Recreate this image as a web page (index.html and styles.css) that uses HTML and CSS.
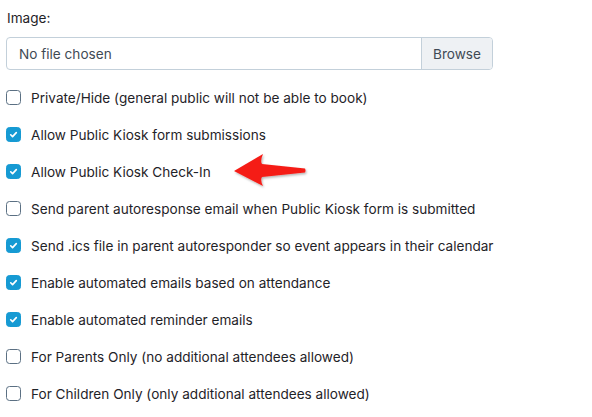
FILE: index.html
```html
<!DOCTYPE html>
<html>
<head>
<meta charset="utf-8">
<link rel="stylesheet" href="styles.css">
</head>
<body>
<div class="form">
  <label class="field-label">Image:</label>
  <div class="file-input">
    <span class="file-name">No file chosen</span>
    <span class="browse">Browse</span>
  </div>
  <div class="checks">
    <div class="row"><span class="box"></span><span>Private/Hide (general public will not be able to book)</span></div>
    <div class="row"><span class="box on"><svg viewBox="0 0 14 14"><path d="M4 7.3l2 2 4-4.3" fill="none" stroke="#fff" stroke-width="1.8" stroke-linecap="round" stroke-linejoin="round"/></svg></span><span>Allow Public Kiosk form submissions</span></div>
    <div class="row"><span class="box on"><svg viewBox="0 0 14 14"><path d="M4 7.3l2 2 4-4.3" fill="none" stroke="#fff" stroke-width="1.8" stroke-linecap="round" stroke-linejoin="round"/></svg></span><span>Allow Public Kiosk Check-In</span></div>
    <div class="row"><span class="box"></span><span>Send parent autoresponse email when Public Kiosk form is submitted</span></div>
    <div class="row"><span class="box on"><svg viewBox="0 0 14 14"><path d="M4 7.3l2 2 4-4.3" fill="none" stroke="#fff" stroke-width="1.8" stroke-linecap="round" stroke-linejoin="round"/></svg></span><span>Send .ics file in parent autoresponder so event appears in their calendar</span></div>
    <div class="row"><span class="box on"><svg viewBox="0 0 14 14"><path d="M4 7.3l2 2 4-4.3" fill="none" stroke="#fff" stroke-width="1.8" stroke-linecap="round" stroke-linejoin="round"/></svg></span><span>Enable automated emails based on attendance</span></div>
    <div class="row"><span class="box on"><svg viewBox="0 0 14 14"><path d="M4 7.3l2 2 4-4.3" fill="none" stroke="#fff" stroke-width="1.8" stroke-linecap="round" stroke-linejoin="round"/></svg></span><span>Enable automated reminder emails</span></div>
    <div class="row"><span class="box"></span><span>For Parents Only (no additional attendees allowed)</span></div>
    <div class="row"><span class="box"></span><span>For Children Only (only additional attendees allowed)</span></div>
  </div>
</div>
<svg class="arrow" width="80" height="40" viewBox="0 0 80 40">
  <defs>
    <filter id="sh" x="-20%" y="-30%" width="140%" height="160%">
      <feDropShadow dx="1" dy="1.5" stdDeviation="1.2" flood-color="#000" flood-opacity="0.3"/>
    </filter>
  </defs>
  <path filter="url(#sh)" d="M4 21 L33 4 Q30 11 32 14 L75 18.5 Q76 20.5 75 22.5 L32 27 Q30 30 33 36 Z" fill="#f51d17"/>
</svg>
</body>
</html>
```
FILE: styles.css
```css
html, body {
  margin: 0;
  padding: 0;
  background: #fff;
}
body {
  font-family: Inter, "Noto Sans", sans-serif;
  font-size: 13.6px;
  color: #1f2328;
  position: relative;
  width: 592px;
  height: 417px;
  overflow: hidden;
}
.form {
  padding: 8px 0 0 6px;
  display: flex;
  flex-direction: column;
}
.field-label {
  line-height: 20px;
  height: 20px;
  margin-bottom: 9px;
  padding-left: 1px;
}
.file-input {
  width: 485px;
  height: 31px;
  border: 1px solid #c3d0da;
  border-radius: 4px;
  display: flex;
  align-items: stretch;
  overflow: hidden;
}
.file-name {
  flex: 1;
  padding-left: 12px;
  display: flex;
  align-items: center;
  color: #3f4a55;
}
.browse {
  width: 70px;
  border-left: 1px solid #c3d0da;
  background: #eef1f4;
  display: flex;
  align-items: center;
  justify-content: center;
  color: #3f4a55;
}
.checks {
  margin-top: 9px;
  display: flex;
  flex-direction: column;
}
.row {
  height: 37px;
  display: flex;
  align-items: center;
  gap: 10px;
  white-space: nowrap;
}
.box {
  width: 15px;
  height: 15px;
  box-sizing: border-box;
  border: 1px solid #5b7083;
  border-radius: 3.5px;
  background: #fff;
  flex: none;
  display: flex;
  align-items: center;
  justify-content: center;
}
.box.on {
  background: #169ad3;
  border-color: #169ad3;
}
.box svg {
  width: 13px;
  height: 13px;
}
.arrow {
  position: absolute;
  left: 230px;
  top: 150px;
}
```
